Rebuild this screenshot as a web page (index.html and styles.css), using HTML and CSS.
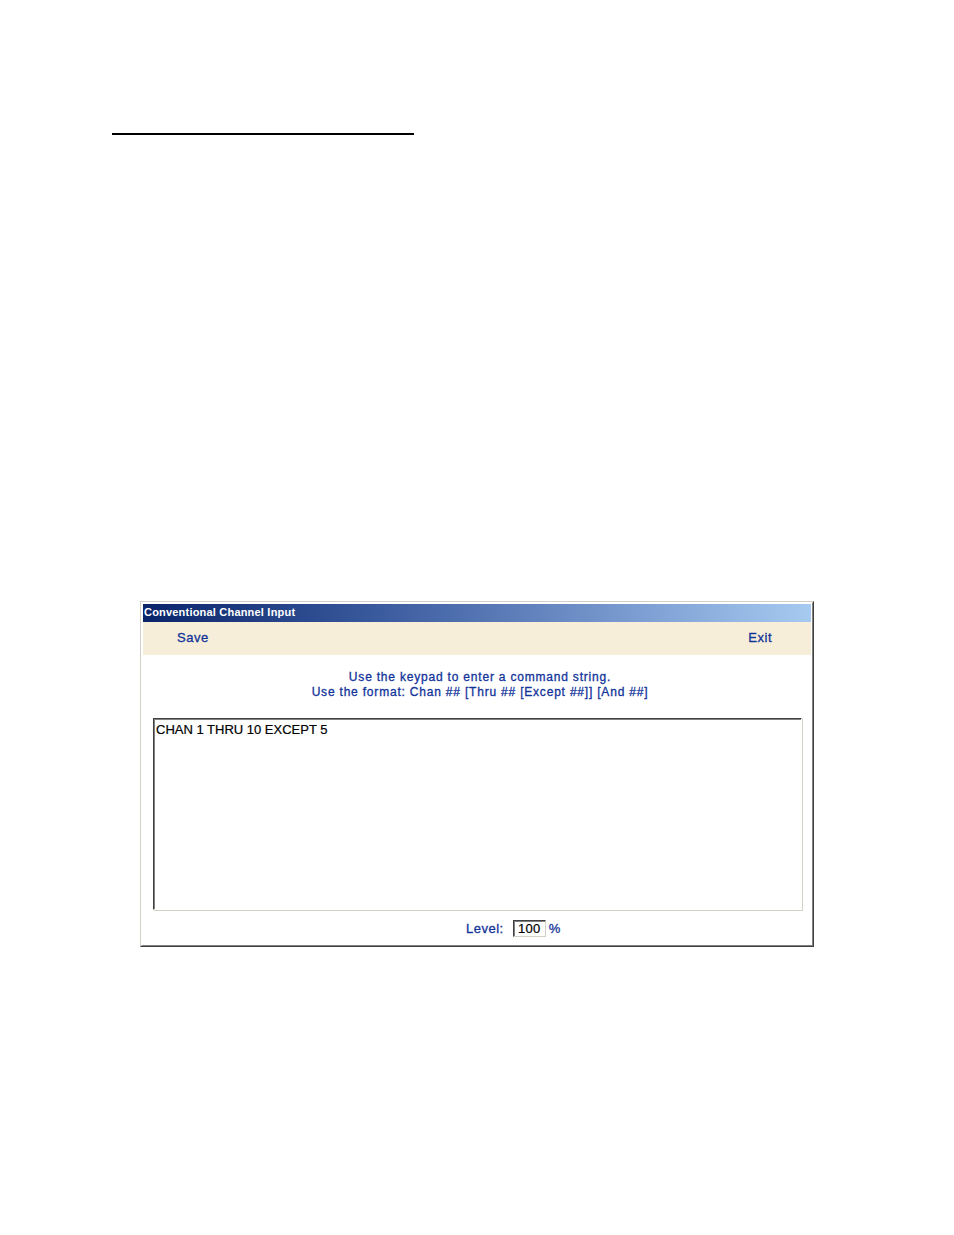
FILE: index.html
```html
<!DOCTYPE html>
<html>
<head>
<meta charset="utf-8">
<link rel="stylesheet" href="styles.css">
</head>
<body>
<div class="page">
  <div class="rule"></div>
  <div class="window">
    <div class="frame">
      <div class="titlebar">Conventional Channel Input</div>
      <div class="toolbar">
        <span class="tool">Save</span>
        <span class="tool">Exit</span>
      </div>
      <div class="client">
        <div class="instructions">
          <div>Use the keypad to enter a command string.</div>
          <div>Use the format: Chan ## [Thru ## [Except ##]] [And ##]</div>
        </div>
        <div class="textarea">CHAN 1 THRU 10 EXCEPT 5</div>
        <div class="level-row">
          <span class="label">Level:</span>
          <span class="level-box">100</span>
          <span class="label">%</span>
        </div>
      </div>
    </div>
  </div>
</div>
</body>
</html>
```
FILE: styles.css
```css
html, body {
  margin: 0;
  padding: 0;
  background: #ffffff;
}
.page {
  width: 954px;
  height: 1235px;
  padding-top: 133px;
  box-sizing: border-box;
  font-family: "Liberation Sans", Arial, sans-serif;
}
.rule {
  width: 302px;
  height: 2px;
  background: #000;
  margin-left: 112px;
}
.window {
  margin-left: 140px;
  margin-top: 466px;
  width: 674px;
  height: 346px;
  box-sizing: border-box;
  border: 1px solid;
  border-color: #d4d0c8 #404040 #404040 #d4d0c8;
}
.frame {
  height: 100%;
  box-sizing: border-box;
  border: 1px solid;
  border-color: #ffffff #808080 #808080 #ffffff;
  padding: 1px;
  display: flex;
  flex-direction: column;
}
.titlebar {
  height: 18px;
  background: linear-gradient(to right, #0a246a 0%, #3a5a9e 35%, #7e9fd3 75%, #a6caf0 100%);
  color: #fff;
  font-weight: bold;
  font-size: 11px;
  letter-spacing: 0.2px;
  line-height: 17px;
  padding-left: 1px;
}
.toolbar {
  height: 33px;
  background: #f6eed8;
  display: flex;
  justify-content: space-between;
  align-items: center;
  padding: 0 39px 0 34px;
}
.tool {
  color: #12339a;
  font-size: 13px;
  letter-spacing: 0.5px;
  -webkit-text-stroke: 0.3px #12339a;
  line-height: 15px;
  margin-top: -2px;
}
.client {
  flex: 1;
  background: #fff;
  display: flex;
  flex-direction: column;
}
.instructions {
  text-align: center;
  color: #12339a;
  font-size: 12px;
  letter-spacing: 0.8px;
  line-height: 15px;
  padding-top: 15px;
  padding-left: 6px;
  -webkit-text-stroke: 0.3px #12339a;
}
.textarea {
  margin: 18px 9px 0 10px;
  height: 192px;
  box-sizing: border-box;
  border: 1px solid;
  border-color: #404040 #ffffff #ffffff #404040;
  box-shadow: inset 1px 1px 0 #808080, 1px 1px 0 #d4d0c8;
  color: #000;
  font-size: 13px;
  padding: 3px 2px;
  line-height: 15px;
  -webkit-text-stroke: 0.2px #000;
}
.level-row {
  display: flex;
  align-items: center;
  padding-left: 323px;
  margin-top: 9px;
  height: 19px;
}
.label {
  color: #12339a;
  font-size: 13px;
  letter-spacing: 0.5px;
  -webkit-text-stroke: 0.3px #12339a;
}
.level-box {
  margin-left: 9px;
  margin-right: 3px;
  width: 33px;
  height: 17px;
  box-sizing: border-box;
  border: 1px solid;
  border-color: #404040 #d4d0c8 #d4d0c8 #404040;
  box-shadow: inset 1px 1px 0 #808080;
  color: #000;
  font-size: 13px;
  line-height: 15px;
  text-align: center;
  letter-spacing: 0.3px;
  -webkit-text-stroke: 0.2px #000;
}
```
